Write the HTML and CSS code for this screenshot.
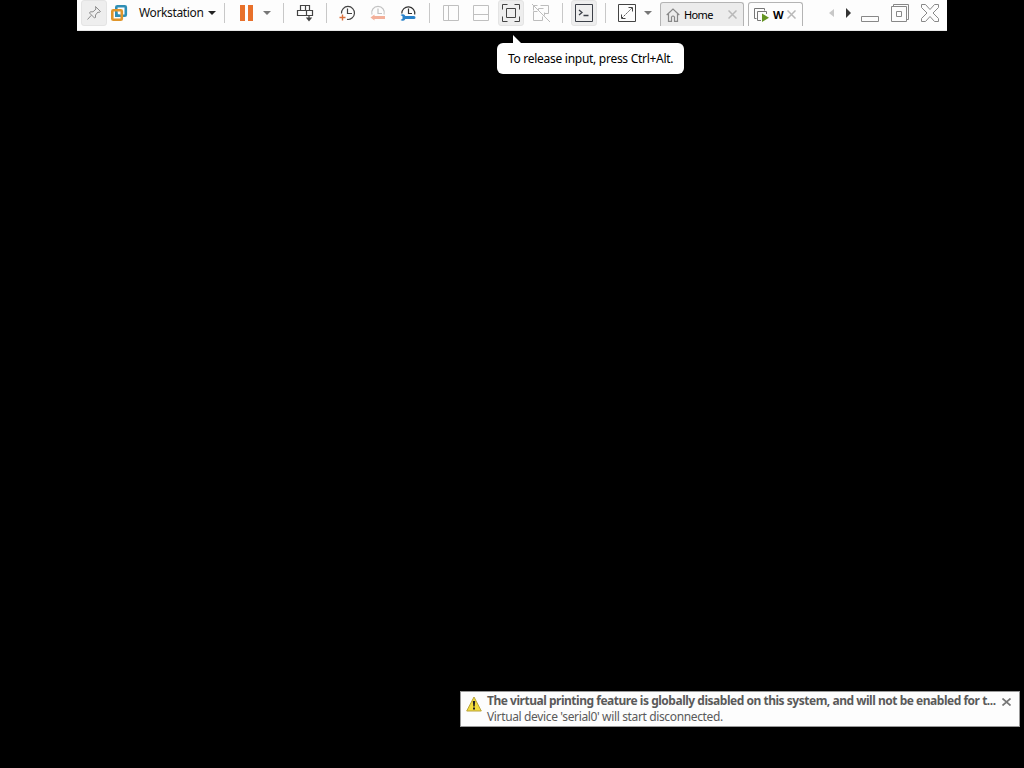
FILE: index.html
```
<!DOCTYPE html>
<html lang="en">
<head>
    <meta charset="UTF-8">
    <meta name="viewport" content="width=device-width, initial-scale=1.0">
    <title>Workstation</title>
    <link rel="stylesheet" href="styles.css">
</head>
<body>
    <header class="toolbar">
        <button class="btn active pin-btn">
            <svg width="16" height="16" viewBox="0 0 16 16" fill="none" stroke="#8c8c8c"><path d="M9.500 1.500l5 5-1.500 1-1-.5-2.500 3 0 2.500-1 .5-5-5 .8-1.200H7l3-2.700-.5-1.300zM5.300 10.300L1.500 14.500"/></svg>
        </button>
        <svg class="logo" width="18" height="18" viewBox="0 0 18 18" fill="none" stroke-width="2.600">
            <rect x="6.300" y="2.300" width="9.500" height="9.500" rx="1" stroke="#2f8fb5"/>
            <rect x="2.300" y="6.300" width="9.500" height="9.500" rx="1" stroke="#e0962b"/>
            <path d="M6.300 8.500V11.800H9.500" stroke="#2f8fb5"/>
        </svg>
        <button class="menu">Workstation</button>
        <span class="caret dark"></span>
        <span class="sep sep-menu"></span>
        <span class="pause"></span>
        <span class="caret caret-power"></span>
        <span class="sep sep-power"></span>
        <svg class="send-keys" width="18" height="20" viewBox="0 0 18 20" fill="none" stroke="#444" stroke-width="1.200">
            <path d="M4.500 2.500h9v5h-9zM1.500 7.500h15v5h-15zM9.500 2.500v5M10.500 7.500v5M13 12v5"/>
            <path d="M9.800 14.500h6.400L13 18.500z" fill="#444" stroke="none"/>
        </svg>
        <span class="sep sep-keys"></span>
        <div class="snapshots">
            <svg width="18" height="18" viewBox="0 0 18 18" fill="none" stroke="#444" stroke-width="1.200">
                <path d="M2.500 9.500A6.500 6.500 0 1 1 8 15.400M8.500 4.500v5H13"/>
                <path d="M.5 13.500h6M3.500 10.500v6" stroke="#d9703c" stroke-width="1.400"/>
            </svg>
            <svg width="18" height="18" viewBox="0 0 18 18" fill="none" stroke="#c2c2c2" stroke-width="1.200">
                <path d="M3 10.500A6.300 6.300 0 1 1 15 10.500M9 4.500v5H13"/>
                <path d="M1.500 13.500l4-3v1.500h10.500v3H5.500v1.500z" fill="#f3b09a" stroke="none"/>
            </svg>
            <svg width="18" height="18" viewBox="0 0 18 18" fill="none" stroke="#333" stroke-width="1.200">
                <path d="M2.800 9.500A6.500 6.500 0 1 1 15.700 10.500M9.500 4.500v5H13"/>
                <path d="M1.500 11a3 3 0 0 1 4.800 1H15a1.500 1.500 0 0 1 0 3H6.300a3 3 0 0 1-4.800 1l2-1.200v-2.600z" fill="#2a82c9" stroke="none"/>
            </svg>
        </div>
        <span class="sep sep-snap"></span>
        <div class="views">
            <svg width="18" height="18" viewBox="0 0 18 18" fill="none" stroke="#c0c0c0"><path d="M1.500 1.500h15v15h-15zM6.500 1.500v15"/></svg>
            <svg width="18" height="18" viewBox="0 0 18 18" fill="none" stroke="#c0c0c0"><path d="M1.500 1.500h15v15h-15zM1.500 10.500h15"/></svg>
        </div>
        <button class="btn active full-btn">
            <svg width="18" height="18" viewBox="0 0 18 18" fill="none" stroke="#444"><path d="M.5 5.500v-5h5M12.500.5h5v5M17.500 12.500v5h-5M5.500 17.500h-5v-5M4.500 4.500h9v9h-9z"/></svg>
        </button>
        <svg class="unity" width="20" height="20" viewBox="0 0 20 20" fill="none" stroke="#bdbdbd">
            <path d="M2.500 7.500v-5h4M9.500 2.500h8v8h-4M6.500 8.500h-4v9h9v-4M7.500 7.500V5.500h5M13.500 12.500V9.500M1 1l18 18"/>
        </svg>
        <span class="sep sep-views"></span>
        <button class="btn active console-btn">
            <svg width="18" height="18" viewBox="0 0 18 18" fill="none" stroke="#3c4048"><path d="M.5.5h17v17H.5z"/><path d="M4 6l3 2.500L4 11M8.500 11.500h5" stroke-width="1.300"/></svg>
        </button>
        <span class="sep sep-console"></span>
        <svg class="stretch" width="18" height="18" viewBox="0 0 18 18" fill="none" stroke="#444">
            <path d="M.5.500h17v17H.5zM10.500 3.500h4v4M3.500 10.500v4h4"/>
            <path d="M4 14L14 4" stroke-dasharray="1.800 1.200"/>
        </svg>
        <span class="caret caret-stretch"></span>
        <nav class="tabs">
            <div class="tab tab-home">
                <svg width="14" height="14" viewBox="0 0 14 14" fill="none" stroke="#888" stroke-width="1.200"><path d="M.7 7L7 1l6.300 6M2.500 5.800v7.500H5.500V9q1.500-2 3 0v4.300h3V5.800"/></svg>
                <span class="tab-name">Home</span>
                <svg class="tab-close" width="9" height="9" viewBox="0 0 9 9" stroke="#b8b8b8" stroke-width="1.500"><path d="M.5.5l8 8M8.500.5l-8 8"/></svg>
            </div>
            <div class="tab tab-vm">
                <svg width="16" height="14" viewBox="0 0 16 14" fill="none" stroke="#777"><path d="M2.500 10.500h-2V.5h10v2M7 12.500H3.500v-9h9V6"/><path d="M8 5.500l7 4.200-7 4.200z" fill="#649522" stroke="none"/></svg>
                <span class="tab-name">W</span>
                <svg class="tab-close" width="9" height="9" viewBox="0 0 9 9" stroke="#b8b8b8" stroke-width="1.500"><path d="M.5.5l8 8M8.500.5l-8 8"/></svg>
            </div>
        </nav>
        <svg class="scroll" width="22" height="10" viewBox="0 0 22 10"><path d="M5 1v8L0 5z" fill="#c8c8c8"/><path d="M17 0v10l5-5z" fill="#333"/></svg>
        <div class="window-controls">
            <svg width="18" height="18" viewBox="0 0 18 18" fill="none" stroke="#888"><path d="M.5 12.500h17v5H.5z"/></svg>
            <svg width="18" height="18" viewBox="0 0 18 18" fill="none" stroke="#888"><path d="M.5 2.500h15v15H.5zM2.500 2.500v-2h15v15h-2M5.500 7.500h5v5h-5z"/></svg>
            <svg width="18" height="18" viewBox="0 0 18 18" fill="none" stroke="#888"><path d="M.5.5h4L9 5.500l4.500-5h4v3L12 9l5.500 5.500v3h-4L9 12.500l-4.500 5h-4v-3L6 9 .5 3.500z"/></svg>
        </div>
    </header>

    <div class="tooltip">To release input, press Ctrl+Alt.</div>

    <div class="notice">
        <svg class="warning" width="16" height="16" viewBox="0 0 16 16">
            <path d="M8 1L15.300 15H.7z" fill="#f2dc3c" stroke="#b9a23a" stroke-linejoin="round"/>
            <path d="M6.800 5h2.400l-.5 5.500H7.300zM7 11.500h2v2H7z" fill="#222"/>
        </svg>
        <div class="notice-text">
            <div class="notice-title">The virtual printing feature is globally disabled on this system, and will not be enabled for t...</div>
            <div class="notice-detail">Virtual device 'serial0' will start disconnected.</div>
        </div>
        <svg class="dismiss" width="9" height="8" viewBox="0 0 9 8" fill="none" stroke="#777" stroke-width="1.700"><path d="M.5.5l8 7M8.500.5l-8 7"/></svg>
    </div>
</body>
</html>
```
FILE: styles.css
```
* {
    margin: 0;
    padding: 0;
    box-sizing: border-box;
}

body {
    font-family: 'Noto Sans', 'Open Sans', sans-serif;
    font-size: 12px;
    background: #000;
    height: 100vh;
    overflow: hidden;
    display: flex;
    flex-direction: column;
}

svg {
    display: block;
    flex: none;
}

button {
    border: none;
    background: none;
    font: inherit;
}

.toolbar {
    display: flex;
    align-items: center;
    width: 870px;
    height: 31px;
    flex: none;
    margin-left: 77px;
    padding: 0 8px 4px 4px;
    background: #fdfdfd;
    border-bottom: 1px solid #e6e6e6;
}

.btn {
    display: flex;
    align-items: center;
    justify-content: center;
    width: 26px;
    height: 26px;
    flex: none;
}

.active {
    background: #eee;
    border: 1px solid #e4e4e4;
    border-radius: 3px;
}

.logo {
    margin-left: 3px;
}

.menu {
    width: 64px;
    margin-left: 11px;
    line-height: 16px;
    letter-spacing: -0.36px;
    text-align: left;
    white-space: nowrap;
    color: #111;
}

.caret {
    flex: none;
    border: 4px solid transparent;
    border-top-color: #777;
    border-bottom: none;
}

.dark {
    margin-left: 5px;
    border-top-color: #222;
}

.sep {
    width: 1px;
    height: 20px;
    flex: none;
    background: #c8c8c8;
}

.sep-menu {
    margin-left: 8px;
}

.pause {
    width: 13px;
    height: 16px;
    flex: none;
    margin-left: 15px;
    border: solid #e8702a;
    border-width: 0 5px;
}

.caret-power {
    margin-left: 10px;
}

.sep-power {
    margin-left: 12px;
}

.send-keys {
    margin-left: 12px;
}

.sep-keys {
    margin-left: 12px;
}

.snapshots {
    display: flex;
    gap: 12px;
    margin-left: 12px;
}

.sep-snap {
    margin-left: 12px;
}

.views {
    display: flex;
    gap: 12px;
    margin-left: 12px;
}

.full-btn {
    margin-left: 8px;
}

.unity {
    margin-left: 7px;
}

.sep-views {
    margin-left: 11px;
}

.console-btn {
    margin-left: 8px;
}

.sep-console {
    margin-left: 8px;
}

.stretch {
    margin-left: 12px;
}

.caret-stretch {
    margin-left: 8px;
}

.tabs {
    display: flex;
    gap: 4px;
    height: 24px;
    margin: 2px 0 0 8px;
}

.tab {
    display: flex;
    align-items: center;
    border: 1px solid #b4b4b4;
    border-bottom: none;
    border-radius: 3px 3px 0 0;
}

.tab-home {
    width: 84px;
    padding: 0 6px 0 5px;
    background: #ececec;
}

.tab-home .tab-name {
    margin-left: 4px;
    font-size: 11px;
    letter-spacing: -0.6px;
}

.tab-vm {
    width: 55px;
    padding: 0 6px 0 5px;
}

.tab-vm .tab-name {
    margin-left: 3px;
    font-size: 11px;
    font-weight: 700;
}

.tab-close {
    margin-left: auto;
}

.scroll {
    margin-left: 26px;
}

.window-controls {
    display: flex;
    gap: 12px;
    margin-left: auto;
}

.tooltip {
    position: absolute;
    left: 497px;
    top: 43px;
    width: 187px;
    height: 31px;
    line-height: 31px;
    padding-left: 11px;
    white-space: nowrap;
    letter-spacing: -0.28px;
    background: #fff;
    border-radius: 6px;
}

.tooltip::before {
    content: '';
    position: absolute;
    left: 16px;
    top: -8px;
    border-left: 8px solid #fff;
    border-top: 8px solid transparent;
}

.notice {
    display: flex;
    align-items: flex-start;
    width: 560px;
    height: 36px;
    flex: none;
    margin: auto 4px 41px auto;
    padding: 1px 8px 0 5px;
    background: #fdfdfd;
    border: 1px solid #999;
    color: #5a5a5a;
    line-height: 16px;
    white-space: nowrap;
}

.warning {
    margin-top: 3px;
}

.notice-text {
    margin-left: 5px;
}

.notice-title {
    font-weight: 700;
    letter-spacing: -0.48px;
}

.notice-detail {
    letter-spacing: -0.36px;
}

.dismiss {
    margin: 5px 0 0 auto;
}
```
